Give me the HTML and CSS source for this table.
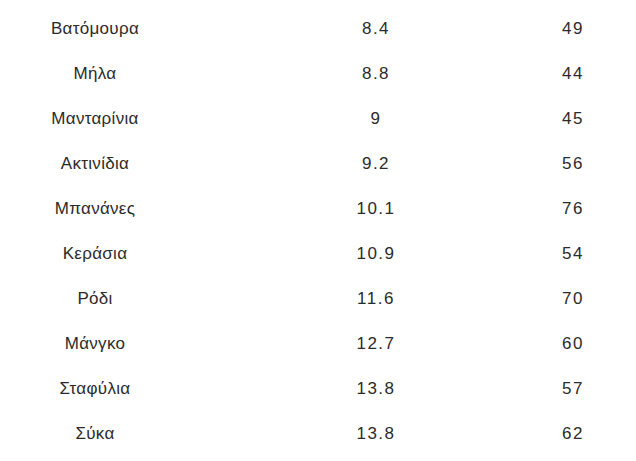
FILE: index.html
```html
<!DOCTYPE html>
<html lang="el">
<head>
<meta charset="utf-8">
<link rel="stylesheet" href="styles.css">
</head>
<body>
<table class="fruit-table">
  <tbody>
    <tr><td class="name">Βατόμουρα</td><td class="val">8.4</td><td class="num">49</td></tr>
    <tr><td class="name">Μήλα</td><td class="val">8.8</td><td class="num">44</td></tr>
    <tr><td class="name">Μανταρίνια</td><td class="val">9</td><td class="num">45</td></tr>
    <tr><td class="name">Ακτινίδια</td><td class="val">9.2</td><td class="num">56</td></tr>
    <tr><td class="name">Μπανάνες</td><td class="val">10.1</td><td class="num">76</td></tr>
    <tr><td class="name">Κεράσια</td><td class="val">10.9</td><td class="num">54</td></tr>
    <tr><td class="name">Ρόδι</td><td class="val">11.6</td><td class="num">70</td></tr>
    <tr><td class="name">Μάνγκο</td><td class="val">12.7</td><td class="num">60</td></tr>
    <tr><td class="name">Σταφύλια</td><td class="val">13.8</td><td class="num">57</td></tr>
    <tr><td class="name">Σύκα</td><td class="val">13.8</td><td class="num">62</td></tr>
  </tbody>
</table>
</body>
</html>
```
FILE: styles.css
```css
body {
  margin: 0;
  padding-top: 6px;
  background: #fff;
  color: #2b2b2b;
  font-family: "Liberation Sans", Arial, sans-serif;
  font-size: 17px;
}
.fruit-table {
  border-collapse: collapse;
  width: 636px;
  table-layout: fixed;
}
.fruit-table td {
  height: 45px;
  padding: 0;
  vertical-align: middle;
  line-height: 20px;
}
.name {
  width: 190px;
  text-align: center;
  letter-spacing: 0.3px;
}
.val {
  width: 372px;
  text-align: center;
  letter-spacing: 1.5px;
}
.num {
  text-align: left;
  letter-spacing: 1.5px;
}
```
